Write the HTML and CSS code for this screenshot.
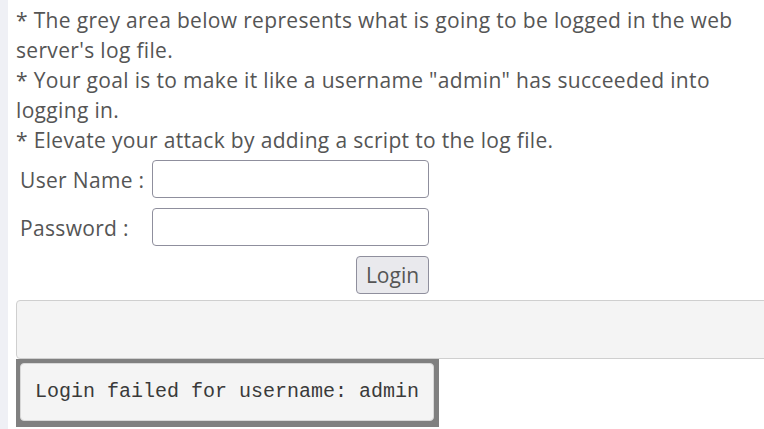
FILE: index.html
```html
<!DOCTYPE html>
<html lang="en">
<head>
<meta charset="utf-8">
<title>Log Spoofing</title>
<link rel="stylesheet" href="styles.css">
</head>
<body>
<div class="page">
  <p class="intro">* The grey area below represents what is going to be logged in the web server's log file.<br>
  * Your goal is to make it like a username "admin" has succeeded into logging in.<br>
  * Elevate your attack by adding a script to the log file.</p>
  <form class="login-form">
    <label class="field-label" for="username">User Name :</label>
    <input class="field-input" id="username" type="text">
    <label class="field-label" for="password">Password :</label>
    <input class="field-input" id="password" type="password">
    <button class="login-btn" type="button">Login</button>
  </form>
  <div class="log-area"></div>
  <div class="log-output">
    <pre class="log-line">Login failed for username: admin</pre>
  </div>
</div>
</body>
</html>
```

FILE: styles.css
```css
html, body {
  margin: 0;
  padding: 0;
  overflow: hidden;
}
body {
  background: #eff0f5;
  font-family: "Open Sans", "Noto Sans", sans-serif;
  font-size: 21px;
  letter-spacing: 0.33px;
  color: #555;
}
.page {
  margin-left: 8px;
  padding: 5px 0 0 8px;
  background: #fff;
  min-height: 100vh;
  width: 800px;
  box-sizing: border-box;
}
.intro {
  margin: 0;
  width: 748px;
  line-height: 30px;
}
.login-form {
  margin-top: 5px;
  display: grid;
  grid-template-columns: 136px 277px;
  row-gap: 10px;
}
.field-label {
  padding-left: 4px;
  padding-top: 2px;
  line-height: 36px;
  height: 38px;
  box-sizing: border-box;
  white-space: nowrap;
}
.field-input {
  height: 38px;
  box-sizing: border-box;
  border: 1px solid #8f8f9d;
  border-radius: 4px;
  background: #fff;
  margin: 0;
  font: inherit;
  padding: 0 8px;
}
.login-btn {
  grid-column: 2;
  justify-self: end;
  width: 73px;
  height: 38px;
  box-sizing: border-box;
  background: #e9e9ed;
  border: 1px solid #8f8f9d;
  border-radius: 4px;
  font: inherit;
  color: #555;
  padding: 0;
  margin: 0;
}
.log-area {
  margin-top: 6px;
  height: 59px;
  width: 780px;
  box-sizing: border-box;
  background: #f4f4f4;
  border: 1px solid #cfcfcf;
  border-radius: 4px;
}
.log-output {
  display: inline-block;
  background: #808080;
  padding: 4px 5px 6px 4px;
}
.log-line {
  margin: 0;
  background: #f4f4f4;
  border: 1px solid #d8d8d8;
  border-radius: 4px;
  padding: 16px 14px;
  font-family: "Liberation Mono", "Courier New", monospace;
  font-size: 20px;
  letter-spacing: 0;
  line-height: 24px;
  color: #3a3a3a;
}
```
